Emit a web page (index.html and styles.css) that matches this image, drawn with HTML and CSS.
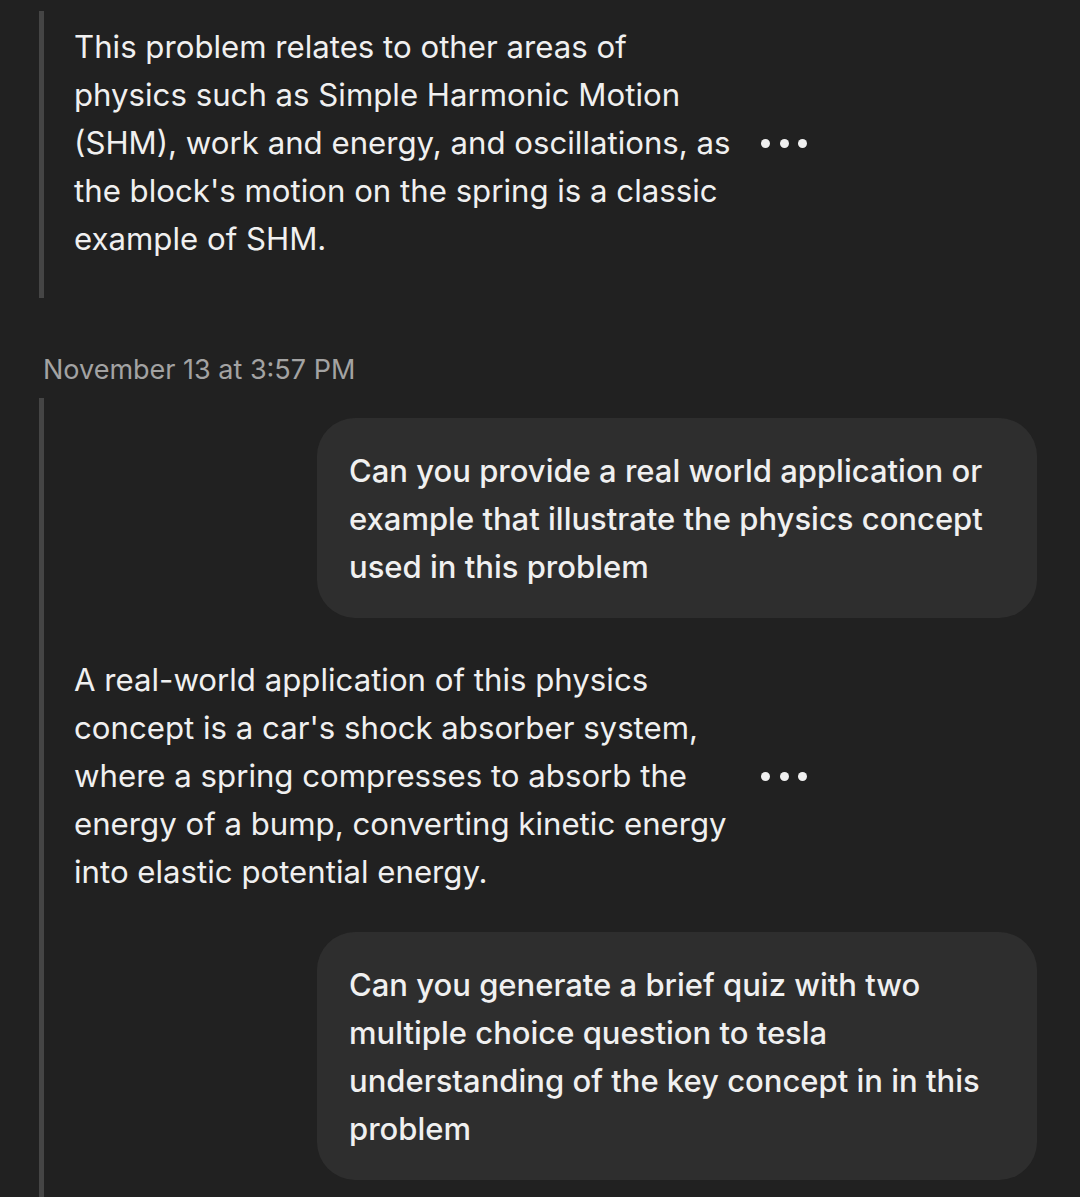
FILE: index.html
```html
<!DOCTYPE html>
<html>
<head>
<meta charset="utf-8">
<link rel="stylesheet" href="styles.css">
</head>
<body>
<div class="thread">
  <section class="group group-first">
    <div class="answer">
      <p class="answer-text">This problem relates to other areas of physics such as Simple Harmonic Motion (SHM), work and energy, and oscillations, as the block's motion on the spring is a classic example of SHM.</p>
      <div class="more"><span></span><span></span><span></span></div>
    </div>
  </section>
  <div class="stamp">November 13 at 3:57 PM</div>
  <section class="group group-second">
    <div class="bubble-row">
      <div class="bubble">Can you provide a real world application or example that illustrate the physics concept used in this problem</div>
    </div>
    <div class="answer answer-second">
      <p class="answer-text">A real-world application of this physics concept is a car's shock absorber system, where a spring compresses to absorb the energy of a bump, converting kinetic energy into elastic potential energy.</p>
      <div class="more"><span></span><span></span><span></span></div>
    </div>
    <div class="bubble-row bubble-row-last">
      <div class="bubble">Can you generate a brief quiz with two multiple choice question to tesla understanding of the key concept in in this problem</div>
    </div>
  </section>
</div>
</body>
</html>
```

FILE: styles.css
```css
html, body {
  margin: 0;
  padding: 0;
  background: #212121;
}
body {
  width: 1080px;
  height: 1197px;
  overflow: hidden;
  font-family: Inter, "Noto Sans", sans-serif;
  color: #f0f0f0;
}
.thread {
  padding-left: 39px;
  padding-top: 11px;
}
.group {
  border-left: 5px solid #454545;
}
.group-first {
  padding: 12px 0 35px 30px;
}
.group-second {
  padding: 20px 43px 40px 0;
}
.answer {
  display: flex;
  align-items: center;
}
.answer-text {
  margin: 0;
  width: 662px;
  font-size: 31.2px;
  line-height: 48px;
  font-weight: 400;
}
.more {
  display: flex;
  gap: 9.5px;
  margin-left: 25px;
}
.more span {
  width: 9px;
  height: 9px;
  border-radius: 50%;
  background: #f0f0f0;
}
.stamp {
  padding: 56px 0 12px 4px;
  font-size: 27px;
  line-height: 32px;
  color: #a3a3a3;
}
.bubble-row {
  display: flex;
  justify-content: flex-end;
}
.bubble {
  width: 720px;
  box-sizing: border-box;
  background: #2e2e2e;
  border-radius: 38px;
  padding: 29px 36px 27px 32px;
  font-size: 31px;
  line-height: 48px;
  font-weight: 500;
}
.answer-second {
  padding: 38px 0 36px 30px;
}
```
